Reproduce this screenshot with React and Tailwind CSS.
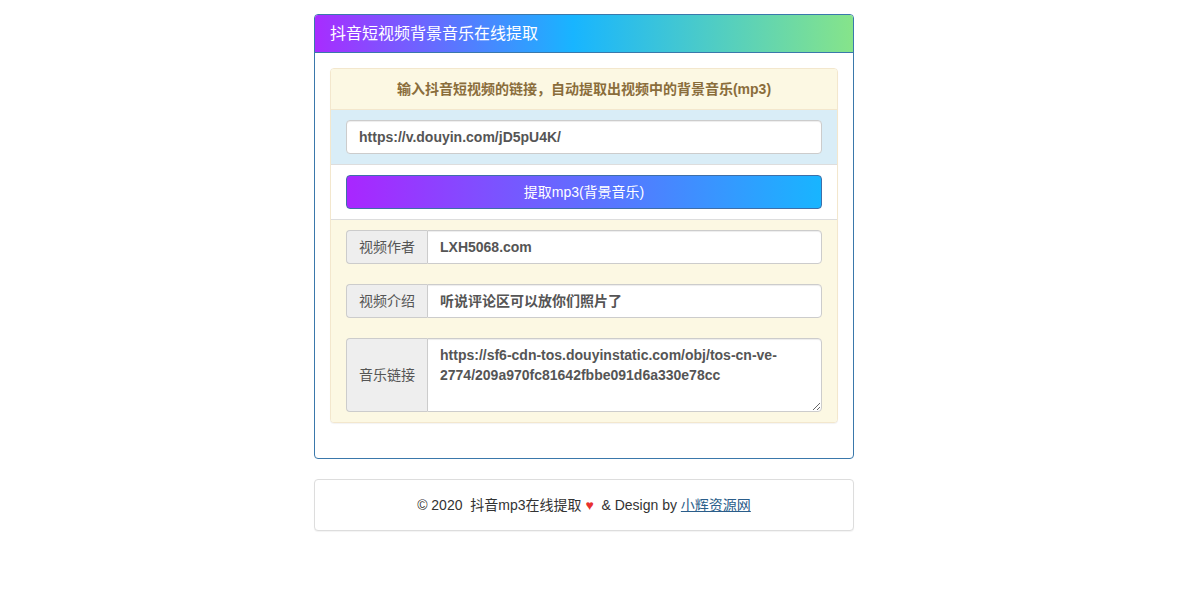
export default function App() {
  const font = { fontFamily: '"Liberation Sans", "Noto Sans CJK SC", sans-serif' };
  return (
    <div className="min-h-[600px] bg-white text-[14px] leading-[20px] text-[#333]" style={font}>
      <div className="w-[1168px] pt-[14px]">
        <div className="mx-auto w-[540px]">
          {/* Outer panel */}
          <div className="mb-[20px] rounded-[4px] border border-[#3a78ab] bg-white">
            <div className="flex h-[38px] items-center rounded-t-[3px] border-b border-[#3a78ab] bg-[linear-gradient(to_right,#a82cff,#18b5ff_48%,#86e48a)] px-[15px] text-[16px] text-white">
              抖音短视频背景音乐在线提取
            </div>
            <div className="p-[15px]">
              <div className="mb-[20px] rounded-[4px] border border-[#f3e7cd] bg-white shadow-[0_1px_1px_rgba(0,0,0,0.05)]">
                <div className="rounded-t-[3px] border-b border-[#f3e7cd] bg-[#fcf8e3] px-[15px] py-[10px] text-center font-bold text-[#8a6d3b]">
                  输入抖音短视频的链接，自动提取出视频中的背景音乐(mp3)
                </div>
                <div className="border-b border-[#dddddd] bg-[#d9edf7] px-[15px] py-[10px]">
                  <input
                    defaultValue="https://v.douyin.com/jD5pU4K/"
                    className="block h-[34px] w-full rounded-[4px] border border-[#cccccc] bg-white px-[12px] font-bold text-[#555] shadow-[inset_0_1px_1px_rgba(0,0,0,0.075)] outline-none"
                    style={font}
                  />
                </div>
                <div className="border-b border-[#dddddd] bg-white px-[15px] py-[10px]">
                  <button
                    className="block h-[34px] w-full rounded-[4px] border border-[#3e6fa8] bg-[linear-gradient(to_right,#a926ff,#18b5ff)] text-white"
                    style={font}
                  >
                    提取mp3(背景音乐)
                  </button>
                </div>
                <div className="flex flex-col gap-[20px] rounded-b-[3px] bg-[#fcf8e3] px-[15px] py-[10px]">
                  <div className="flex h-[34px]">
                    <span className="flex w-[81px] shrink-0 items-center justify-center rounded-l-[4px] border border-r-0 border-[#cccccc] bg-[#eeeeee] text-[#555]">
                      视频作者
                    </span>
                    <input
                      defaultValue="LXH5068.com"
                      className="min-w-0 flex-1 rounded-r-[4px] border border-[#cccccc] bg-white px-[12px] font-bold text-[#555] shadow-[inset_0_1px_1px_rgba(0,0,0,0.075)] outline-none"
                      style={font}
                    />
                  </div>
                  <div className="flex h-[34px]">
                    <span className="flex w-[81px] shrink-0 items-center justify-center rounded-l-[4px] border border-r-0 border-[#cccccc] bg-[#eeeeee] text-[#555]">
                      视频介绍
                    </span>
                    <input
                      defaultValue="听说评论区可以放你们照片了"
                      className="min-w-0 flex-1 rounded-r-[4px] border border-[#cccccc] bg-white px-[12px] font-bold text-[#555] shadow-[inset_0_1px_1px_rgba(0,0,0,0.075)] outline-none"
                      style={font}
                    />
                  </div>
                  <div className="flex h-[74px]">
                    <span className="flex w-[81px] shrink-0 items-center justify-center rounded-l-[4px] border border-r-0 border-[#cccccc] bg-[#eeeeee] text-[#555]">
                      音乐链接
                    </span>
                    <textarea
                      rows={3}
                      defaultValue="https://sf6-cdn-tos.douyinstatic.com/obj/tos-cn-ve-2774/209a970fc81642fbbe091d6a330e78cc"
                      className="min-w-0 flex-1 resize-y rounded-r-[4px] border border-[#cccccc] bg-white px-[12px] py-[6px] font-bold leading-[20px] text-[#555] shadow-[inset_0_1px_1px_rgba(0,0,0,0.075)] outline-none"
                      style={font}
                    />
                  </div>
                </div>
              </div>
            </div>
          </div>
          {/* Footer */}
          <div className="flex h-[52px] items-center justify-center rounded-[4px] border border-[#dddddd] bg-white text-[#333] shadow-[0_1px_1px_rgba(0,0,0,0.05)]">
            <span className="whitespace-pre">© 2020  抖音mp3在线提取 </span>
            <span className="text-[#e8312f]">♥</span>
            <span className="whitespace-pre">  &amp; Design by </span>
            <a href="#" className="text-[#2a5d8a] underline">小辉资源网</a>
          </div>
        </div>
      </div>
    </div>
  );
}
